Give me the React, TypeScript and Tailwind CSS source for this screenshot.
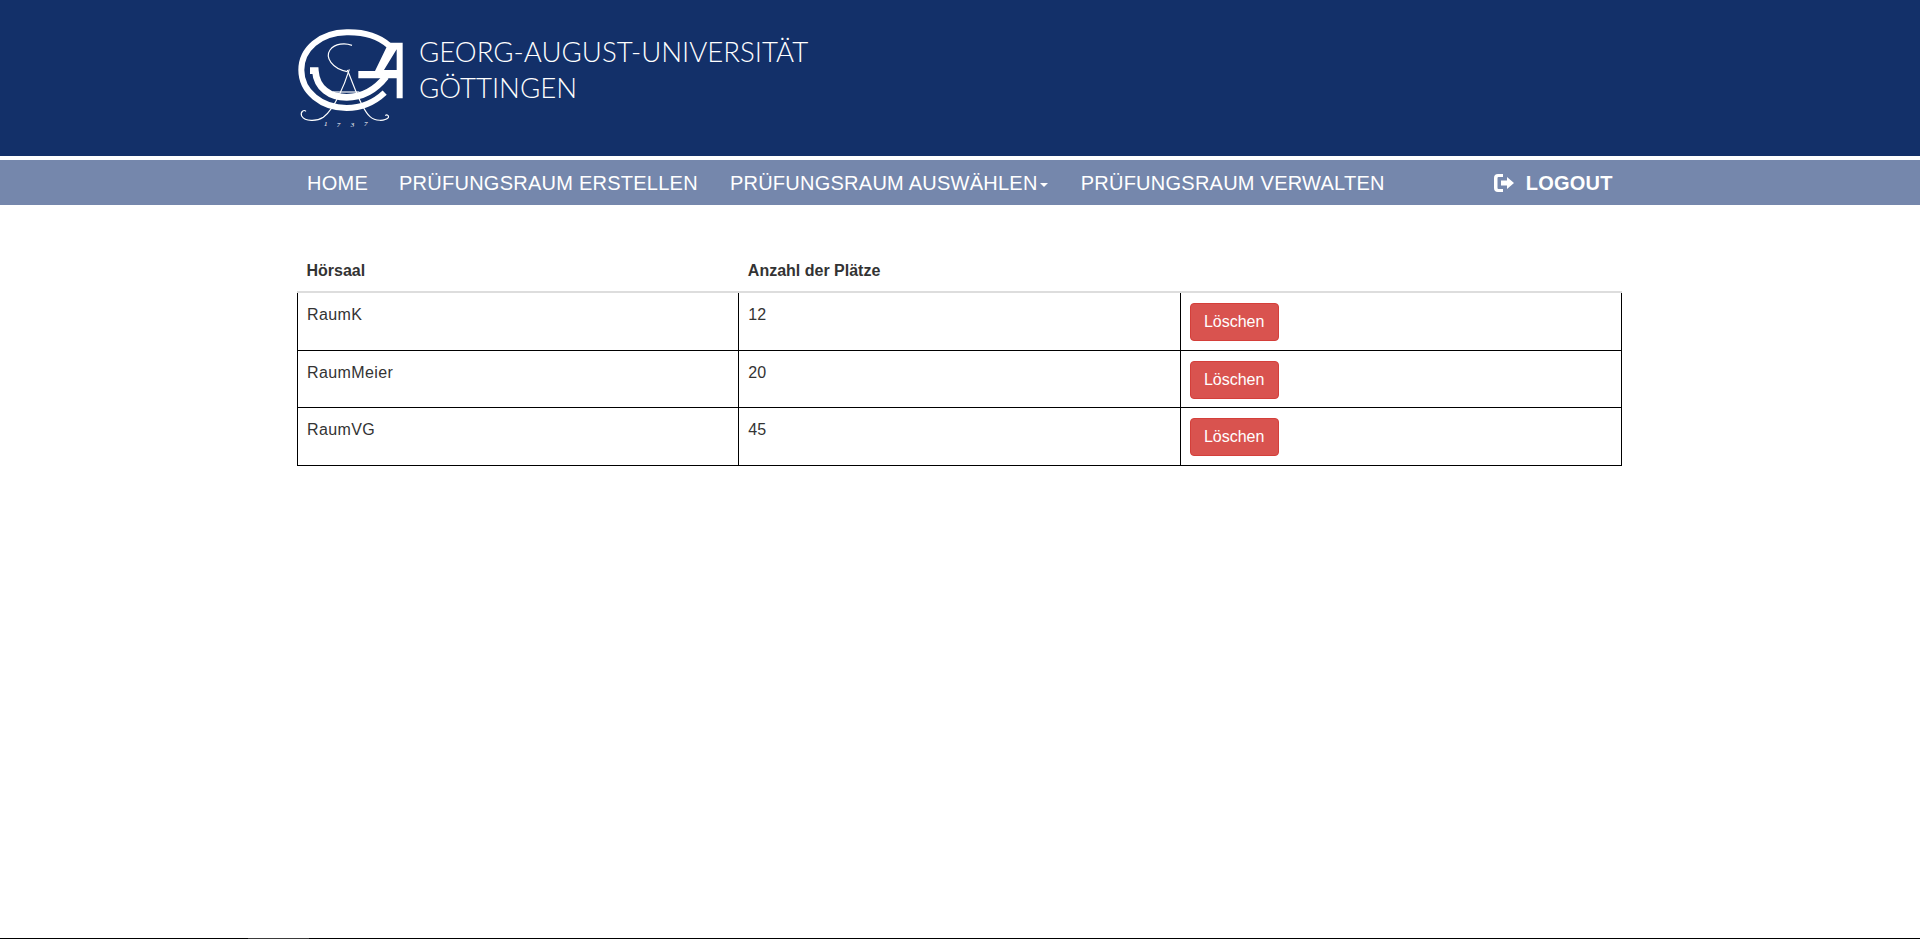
import React from "react";

const rooms = [
  { name: "RaumK", seats: 12 },
  { name: "RaumMeier", seats: 20 },
  { name: "RaumVG", seats: 45 },
];

const Logo = () => (
  <svg width="130" height="115" viewBox="0 0 390 345" fill="none" className="shrink-0">
    {/* outer C */}
    <path d="M296 76 C262 46 215 36 170 37 C90 38 34 88 34 150 C34 215 95 264 170 264 C215 264 252 248 284 218" stroke="white" strokeWidth="18" />
    {/* inner G */}
    <path d="M60 152 L76 152 C80 205 120 232 170 232 C215 232 255 212 288 170" stroke="white" strokeWidth="20" />
    {/* A */}
    <path fillRule="evenodd" d="M296 68 H338 V235 H320 V175 H205 V153 H255 Z M320 88 V150 H282 Z" fill="white" />
    {/* script C and A */}
    <path d="M186 76 C165 68 135 70 120 90 C105 112 125 145 172 155" stroke="white" strokeWidth="3.5" />
    <path d="M178 148 C165 190 135 265 100 292 C80 305 45 305 35 288 C30 275 42 268 48 274" stroke="white" strokeWidth="3.5" />
    <path d="M172 150 C190 190 212 265 240 290 C255 304 285 304 295 293 C298 286 290 282 286 287" stroke="white" strokeWidth="3.5" />
    <path d="M128 216 H208" stroke="white" strokeWidth="3.5" />
    <text x="102" y="318" fill="white" fontSize="21" fontStyle="italic" fontFamily="'Liberation Serif', serif">1</text>
    <text x="140" y="322" fill="white" fontSize="21" fontStyle="italic" fontFamily="'Liberation Serif', serif">7</text>
    <text x="182" y="322" fill="white" fontSize="21" fontStyle="italic" fontFamily="'Liberation Serif', serif">3</text>
    <text x="222" y="317" fill="white" fontSize="21" fontStyle="italic" fontFamily="'Liberation Serif', serif">7</text>
  </svg>
);

export default function App() {
  return (
    <div className="min-h-[939px] bg-white flex flex-col font-['Liberation_Sans',Arial,sans-serif] text-[16px] text-[#333]">
      <header className="h-[156px] bg-[#133069] pl-[290px] pt-[20px]">
        <div className="flex items-start">
          <Logo />
          <div className="-ml-px pt-[14px] font-['Lato',sans-serif] font-light text-[27.6px] leading-[36px] text-white">
            <div>GEORG-AUGUST-UNIVERSITÄT</div>
            <div>GÖTTINGEN</div>
          </div>
        </div>
      </header>
      <nav className="mt-[4px] h-[45px] bg-[#7587ac] pl-[307px] flex items-center text-[20px] tracking-[0.25px] text-white">
        <a>HOME</a>
        <a className="ml-[31px]">PRÜFUNGSRAUM ERSTELLEN</a>
        <a className="ml-[32px] flex items-center">
          PRÜFUNGSRAUM AUSWÄHLEN
          <span className="ml-[2px] mt-[4px] w-0 h-0 border-x-[4px] border-x-transparent border-t-[4px] border-t-white" />
        </a>
        <a className="ml-[33px]">PRÜFUNGSRAUM VERWALTEN</a>
        <a className="ml-[108px] flex items-center gap-[11px] font-bold tracking-[0.25px]">
          <svg width="22" height="20" viewBox="0 0 22 20" fill="white">
            <path d="M10 1H5a4 4 0 0 0-4 4v10a4 4 0 0 0 4 4h5v-3H5.500a1 1 0 0 1-1-1V5a1 1 0 0 1 1-1H10z" />
            <path d="M8 7.500h6V4l7 6-7 6v-3.500H8z" />
          </svg>
          LOGOUT
        </a>
      </nav>
      <main className="pl-[297px] pt-[45px] flex-1">
        <table className="w-[1325px] table-fixed border-collapse">
          <thead>
            <tr className="h-[42px] text-left border-b-2 border-[#ddd]">
              <th className="px-[9px] py-[8px] align-bottom">Hörsaal</th>
              <th className="px-[9px] py-[8px] align-bottom">Anzahl der Plätze</th>
              <th className="px-[9px] py-[8px] align-bottom" />
            </tr>
          </thead>
          <tbody>
            {rooms.map((room) => (
              <tr key={room.name}>
                <td className="border border-black border-t-0 px-[9px] pt-[10px] pb-[8.5px] align-top tracking-[0.4px]">{room.name}</td>
                <td className="border border-black border-t-0 px-[9px] pt-[10px] pb-[8.5px] align-top">{room.seats}</td>
                <td className="border border-black border-t-0 px-[9px] pt-[10px] pb-[8.5px] align-top">
                  <button className="block w-[89px] h-[38px] bg-[#d9534f] border border-[#d43f3a] rounded-[4px] text-white">
                    Löschen
                  </button>
                </td>
              </tr>
            ))}
          </tbody>
        </table>
      </main>
      <div className="h-px bg-black flex">
        <div className="ml-[248px] w-[61px] bg-[#3a3a3a]" />
      </div>
    </div>
  );
}
